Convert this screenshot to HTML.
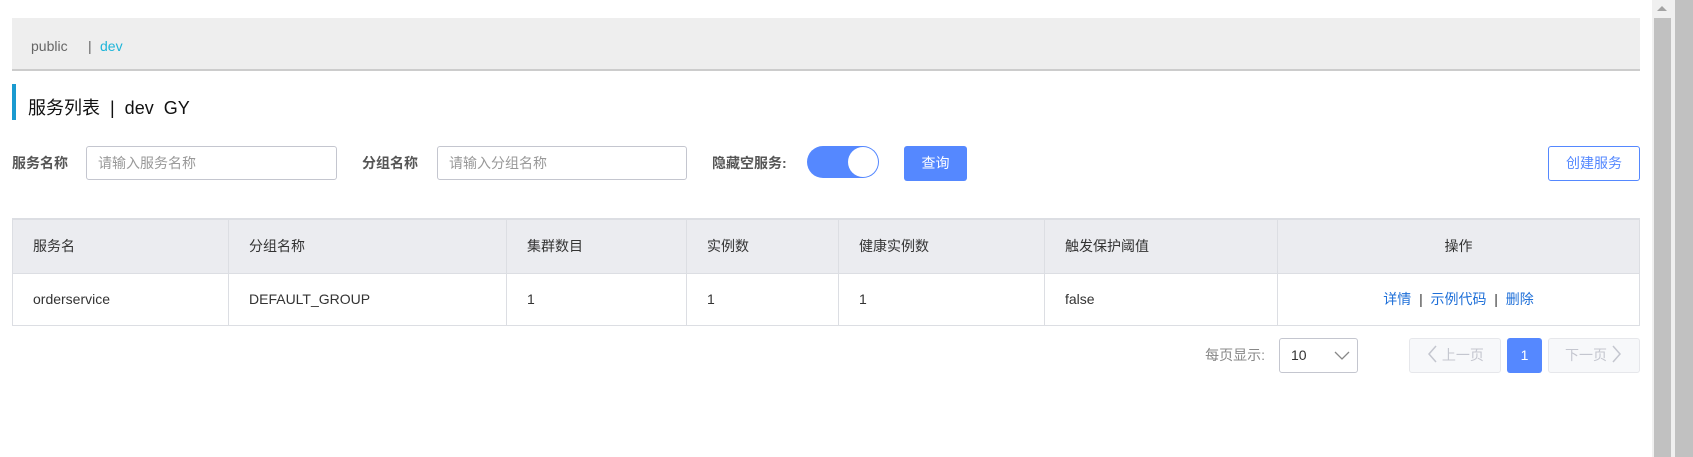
<!DOCTYPE html>
<html><head><meta charset="utf-8"><style>
*{box-sizing:border-box;margin:0;padding:0}
body{width:1693px;height:457px;background:#fff;position:relative;overflow:hidden;font-family:"Liberation Sans","Noto Sans CJK SC",sans-serif;color:#333}
.a{position:absolute}
.hdr{left:12px;top:18px;width:1628px;height:53px;background:#eee;border-bottom:2px solid #ccc}
.lbl{font-size:14px;font-weight:bold;color:#555;line-height:34px;top:146px}
.inp{top:146px;height:34px;border:1px solid #c4c6cf;border-radius:3px;font-size:14px;color:#999;line-height:32px;padding-left:11px}
table{position:absolute;left:12px;top:218px;width:1628px;border-collapse:collapse;font-size:14px}
td,th{border:1px solid #dcdee3;text-align:left;padding-left:20px;font-weight:normal;color:#333}
th{background:#ebecf0;height:54px;border-top:2px solid #dcdee3}
td{height:52px}
.pg{top:338px;height:35px;border:1px solid #e6e7eb;border-radius:3px;background:#f7f8fa;color:#c4c6cf;font-size:14px;line-height:33px;text-align:center}
.pg svg{vertical-align:-3px}
</style></head><body>
<div class="a hdr"></div>
<div class="a" style="left:31px;top:36px;font-size:14px;color:#666;line-height:20px">public</div>
<div class="a" style="left:88px;top:36px;font-size:14px;color:#666;line-height:20px">|</div>
<div class="a" style="left:100px;top:36px;font-size:14px;color:#1fb5d9;line-height:20px">dev</div>
<div class="a" style="left:12px;top:84px;width:4px;height:36px;background:#1a9ad0"></div>
<div class="a" style="left:28px;top:96px;font-size:18px;color:#111;line-height:24px;white-space:pre">服务列表  |  dev  GY</div>
<div class="a lbl" style="left:12px">服务名称</div>
<div class="a inp" style="left:86px;width:251px">请输入服务名称</div>
<div class="a lbl" style="left:362px">分组名称</div>
<div class="a inp" style="left:437px;width:250px">请输入分组名称</div>
<div class="a lbl" style="left:712px">隐藏空服务:</div>
<div class="a" style="left:807px;top:146px;width:72px;height:32px;border-radius:16px;background:#5588ff"></div>
<div class="a" style="left:848px;top:147px;width:30px;height:30px;border-radius:50%;background:#fff"></div>
<div class="a" style="left:904px;top:146px;width:63px;height:35px;border-radius:3px;background:#5588ff;color:#fff;font-size:14px;line-height:35px;text-align:center">查询</div>
<div class="a" style="left:1548px;top:146px;width:92px;height:35px;border-radius:3px;border:1px solid #5588ff;color:#5588ff;font-size:14px;line-height:33px;text-align:center">创建服务</div>
<table>
<tr><th style="width:216px">服务名</th><th style="width:278px">分组名称</th><th style="width:180px">集群数目</th><th style="width:152px">实例数</th><th style="width:206px">健康实例数</th><th style="width:233px">触发保护阈值</th><th style="text-align:center;padding:0">操作</th></tr>
<tr><td>orderservice</td><td>DEFAULT_GROUP</td><td>1</td><td>1</td><td>1</td><td>false</td><td style="text-align:center;padding:0;color:#333;white-space:pre"><span style="color:#1e6fd8">详情</span>  |  <span style="color:#1e6fd8">示例代码</span>  |  <span style="color:#1e6fd8">删除</span></td></tr>
</table>
<div class="a" style="left:1180px;top:338px;width:85px;line-height:35px;font-size:14px;color:#888;text-align:right">每页显示:</div>
<div class="a" style="left:1279px;top:338px;width:79px;height:35px;border:1px solid #c4c6cf;border-radius:3px;font-size:14px;line-height:33px;padding-left:11px;color:#333">10
<svg class="a" style="left:54px;top:10px" width="16" height="12"><path d="M1 3 L8 10 L15 3" fill="none" stroke="#888" stroke-width="1.3"/></svg></div>
<div class="a pg" style="left:1409px;width:92px"><svg width="12" height="18"><path d="M10 1 L3 9 L10 17" fill="none" stroke="#c4c6cf" stroke-width="1.5"/></svg> 上一页</div>
<div class="a" style="left:1507px;top:338px;width:35px;height:35px;border-radius:3px;background:#5588ff;color:#fff;font-size:14px;line-height:35px;text-align:center">1</div>
<div class="a pg" style="left:1548px;width:92px">下一页 <svg width="12" height="18"><path d="M2 1 L9 9 L2 17" fill="none" stroke="#c4c6cf" stroke-width="1.5"/></svg></div>
<div class="a" style="left:1652px;top:0;width:23px;height:457px;background:#f0f0f0"></div>
<div class="a" style="left:1654px;top:18px;width:17px;height:439px;background:#c1c1c1"></div>
<div class="a" style="left:1657px;top:6px;width:0;height:0;border-left:5px solid transparent;border-right:5px solid transparent;border-bottom:5px solid #a3a3a3"></div>
<div class="a" style="left:1675px;top:0;width:18px;height:457px;background:#c1c1c1"></div>
</body></html>
